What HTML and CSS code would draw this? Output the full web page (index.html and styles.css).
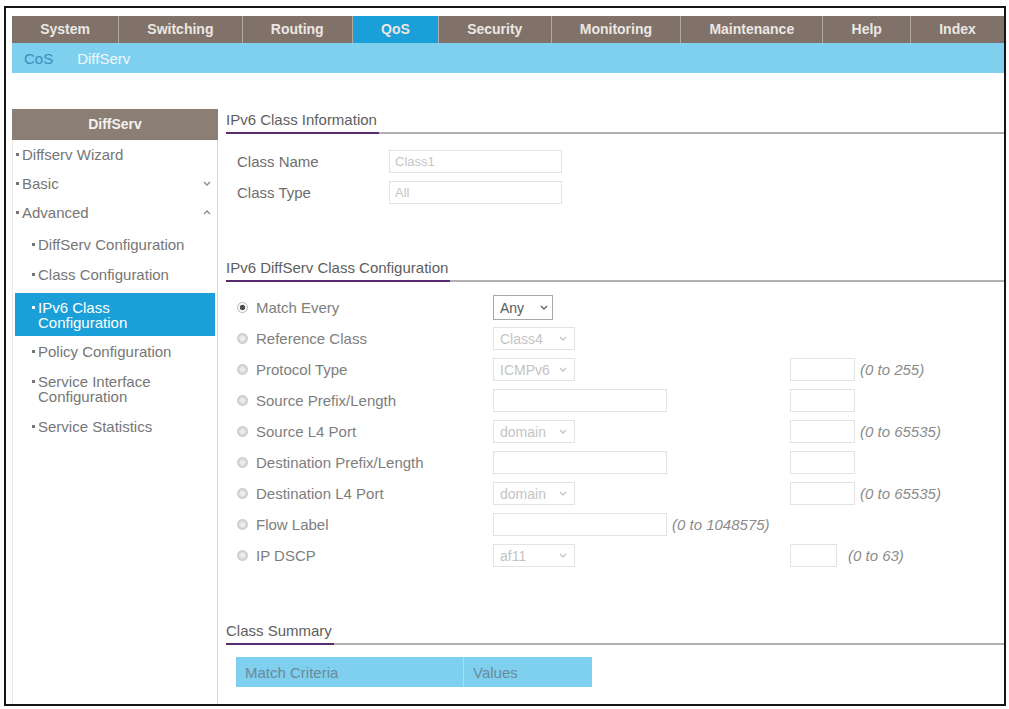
FILE: index.html
```html
<!DOCTYPE html>
<html lang="en">
<head>
    <meta charset="UTF-8">
    <meta name="viewport" content="width=device-width, initial-scale=1.0">
    <title>DiffServ - IPv6 Class Configuration</title>
    <link rel="stylesheet" href="styles.css">
</head>
<body>

    <div class="frame">
        <ul class="topnav">
            <li>System</li>
            <li>Switching</li>
            <li>Routing</li>
            <li class="active">QoS</li>
            <li>Security</li>
            <li>Monitoring</li>
            <li>Maintenance</li>
            <li>Help</li>
            <li>Index</li>
        </ul>
        <div class="subnav">
            <a href="#">CoS</a>
            <a href="#" class="current">DiffServ</a>
        </div>

        <div class="layout">
            <div class="sidebar">
                <div class="sidebar-title">DiffServ</div>
                <ul class="side-menu">
                    <li>Diffserv Wizard</li>
                    <li class="toggle">Basic
                        <svg class="chevron" width="8" height="5" viewBox="0 0 8 5"><path d="M1 1 L4 4 L7 1" fill="none" stroke="#8a8a8a" stroke-width="1.4"/></svg>
                    </li>
                    <li class="toggle">Advanced
                        <svg class="chevron" width="8" height="5" viewBox="0 0 8 5"><path d="M1 4 L4 1 L7 4" fill="none" stroke="#8a8a8a" stroke-width="1.4"/></svg>
                    </li>
                    <li class="sub first-sub">DiffServ Configuration</li>
                    <li class="sub">Class Configuration</li>
                    <li class="sub active">IPv6 Class Configuration</li>
                    <li class="sub">Policy Configuration</li>
                    <li class="sub">Service Interface Configuration</li>
                    <li class="sub">Service Statistics</li>
                </ul>
            </div>

            <div class="main">
                <h2 class="section-title"><span>IPv6 Class Information</span></h2>
                <div class="info-grid">
                    <label>Class Name</label>
                    <input type="text" class="field" value="Class1" disabled>
                    <label>Class Type</label>
                    <input type="text" class="field" value="All" disabled>
                </div>

                <h2 class="section-title second"><span>IPv6 DiffServ Class Configuration</span></h2>
                <div class="match-list">
                    <div class="match-row">
                        <div class="option"><span class="radio checked"></span>Match Every</div>
                        <div class="cell">
                            <div class="select enabled short"><span>Any</span>
                                <svg width="8" height="5" viewBox="0 0 8 5"><path d="M1 1 L4 4 L7 1" fill="none" stroke="#666" stroke-width="1.4"/></svg>
                            </div>
                        </div>
                        <div class="cell"></div>
                    </div>
                    <div class="match-row">
                        <div class="option"><span class="radio"></span>Reference Class</div>
                        <div class="cell">
                            <div class="select"><span>Class4</span>
                                <svg width="8" height="5" viewBox="0 0 8 5"><path d="M1 1 L4 4 L7 1" fill="none" stroke="#c4c4c4" stroke-width="1.4"/></svg>
                            </div>
                        </div>
                        <div class="cell"></div>
                    </div>
                    <div class="match-row">
                        <div class="option"><span class="radio"></span>Protocol Type</div>
                        <div class="cell">
                            <div class="select"><span>ICMPv6</span>
                                <svg width="8" height="5" viewBox="0 0 8 5"><path d="M1 1 L4 4 L7 1" fill="none" stroke="#c4c4c4" stroke-width="1.4"/></svg>
                            </div>
                        </div>
                        <div class="cell"><input type="text" class="field small" disabled><span class="range">(0 to 255)</span></div>
                    </div>
                    <div class="match-row">
                        <div class="option"><span class="radio"></span>Source Prefix/Length</div>
                        <div class="cell"><input type="text" class="field wide" disabled></div>
                        <div class="cell"><input type="text" class="field small" disabled></div>
                    </div>
                    <div class="match-row">
                        <div class="option"><span class="radio"></span>Source L4 Port</div>
                        <div class="cell">
                            <div class="select"><span>domain</span>
                                <svg width="8" height="5" viewBox="0 0 8 5"><path d="M1 1 L4 4 L7 1" fill="none" stroke="#c4c4c4" stroke-width="1.4"/></svg>
                            </div>
                        </div>
                        <div class="cell"><input type="text" class="field small" disabled><span class="range">(0 to 65535)</span></div>
                    </div>
                    <div class="match-row">
                        <div class="option"><span class="radio"></span>Destination Prefix/Length</div>
                        <div class="cell"><input type="text" class="field wide" disabled></div>
                        <div class="cell"><input type="text" class="field small" disabled></div>
                    </div>
                    <div class="match-row">
                        <div class="option"><span class="radio"></span>Destination L4 Port</div>
                        <div class="cell">
                            <div class="select"><span>domain</span>
                                <svg width="8" height="5" viewBox="0 0 8 5"><path d="M1 1 L4 4 L7 1" fill="none" stroke="#c4c4c4" stroke-width="1.4"/></svg>
                            </div>
                        </div>
                        <div class="cell"><input type="text" class="field small" disabled><span class="range">(0 to 65535)</span></div>
                    </div>
                    <div class="match-row">
                        <div class="option"><span class="radio"></span>Flow Label</div>
                        <div class="cell"><input type="text" class="field wide" disabled><span class="range">(0 to 1048575)</span></div>
                        <div class="cell"></div>
                    </div>
                    <div class="match-row">
                        <div class="option"><span class="radio"></span>IP DSCP</div>
                        <div class="cell">
                            <div class="select"><span>af11</span>
                                <svg width="8" height="5" viewBox="0 0 8 5"><path d="M1 1 L4 4 L7 1" fill="none" stroke="#c4c4c4" stroke-width="1.4"/></svg>
                            </div>
                        </div>
                        <div class="cell"><input type="text" class="field tiny" disabled><span class="range far">(0 to 63)</span></div>
                    </div>
                </div>

                <h2 class="section-title third"><span>Class Summary</span></h2>
                <table class="summary">
                    <tr>
                        <th class="criteria">Match Criteria</th>
                        <th>Values</th>
                    </tr>
                </table>
            </div>
        </div>
    </div>

</body>
</html>
```
FILE: styles.css
```css
body {
    margin: 0;
    background-color: #ffffff;
    font-family: "Liberation Sans", Arial, sans-serif;
    color: #777777;
}
.frame {
    box-sizing: border-box;
    width: 1002px;
    height: 700px;
    margin: 6px 0 0 4px;
    padding: 8px 0 0 6px;
    border: 2px solid #161616;
    display: flex;
    flex-direction: column;
    overflow: hidden;
}
.topnav {
    display: flex;
    list-style: none;
    margin: 0;
    padding: 0;
    height: 27px;
    background-color: #807269;
}
.topnav li {
    flex: 1 1 auto;
    padding: 0 21px;
    border-left: 1px solid #b3a9a2;
    color: #ebe7e3;
    font-size: 14px;
    font-weight: bold;
    line-height: 27px;
    text-align: center;
}
.topnav li:first-child {
    border-left: none;
}
.topnav li.active {
    background-color: #1b9fd8;
}
.subnav {
    display: flex;
    gap: 24px;
    height: 30px;
    padding-left: 12px;
    background-color: #7fcfee;
    font-size: 15px;
    line-height: 32px;
}
.subnav a {
    color: #3a8ebf;
    text-decoration: none;
}
.subnav a.current {
    color: #f0f9fd;
}
.layout {
    display: flex;
    flex: 1;
    margin-top: 36px;
}

/* sidebar */
.sidebar {
    width: 206px;
    flex-shrink: 0;
    display: flex;
    flex-direction: column;
}
.sidebar-title {
    height: 31px;
    line-height: 31px;
    background-color: #8b7e75;
    color: #f4f1ee;
    text-align: center;
    font-size: 14px;
    font-weight: bold;
}
.side-menu {
    flex: 1;
    list-style: none;
    margin: 0;
    padding: 0;
    border-left: 1px solid #e8e8e8;
    border-right: 1px solid #dcdcdc;
    font-size: 15px;
    line-height: 15px;
    color: #767676;
}
.side-menu li {
    display: flex;
    padding: 7px 28px 7px 3px;
}
.side-menu li::before {
    content: "";
    flex-shrink: 0;
    width: 3px;
    height: 3px;
    margin: 6px 3px 0 0;
    background-color: currentColor;
}
.side-menu li.toggle {
    padding-right: 6px;
}
.side-menu .chevron {
    margin: 5px 0 0 auto;
}
.side-menu li.sub {
    padding: 7.5px 28px 7.5px 19px;
}
.side-menu li.first-sub {
    margin-top: 2px;
}
.side-menu li.active {
    margin: 4px 2px 0 2px;
    padding: 6.5px 28px 6.5px 17px;
    background-color: #1b9fd8;
    color: #ffffff;
}

/* main content */
.main {
    flex: 1;
    padding: 2px 0 0 8px;
}
.section-title {
    margin: 0;
    font-size: 15px;
    font-weight: normal;
    line-height: 18px;
    color: #5e5e5e;
    border-bottom: 2px solid #b1afb2;
}
.section-title span {
    display: inline-block;
    padding: 0 2px 3px 0;
    margin-bottom: -2px;
    border-bottom: 2px solid #5b2b70;
}
.section-title.second {
    margin-top: 55px;
}
.section-title.third {
    margin-top: 51px;
}
.info-grid {
    display: grid;
    grid-template-columns: 152px 173px;
    row-gap: 8px;
    align-items: center;
    padding: 16px 0 0 11px;
    font-size: 15px;
    color: #6e6e6e;
}
.field {
    box-sizing: border-box;
    height: 23px;
    padding: 0 5px;
    border: 1px solid #e3e3e3;
    background-color: #ffffff;
    font-family: "Liberation Sans", Arial, sans-serif;
    font-size: 13px;
    color: #c6c6c6;
}
.info-grid .field {
    width: 173px;
}
.field.wide {
    width: 174px;
}
.field.small {
    width: 65px;
}
.field.tiny {
    width: 47px;
}
.match-list {
    padding: 10px 0 0 11px;
}
.match-row {
    display: grid;
    grid-template-columns: 256px 297px auto;
    height: 31px;
    align-items: center;
    font-size: 15px;
}
.option {
    display: flex;
    align-items: center;
    gap: 8px;
    color: #7e7e7e;
}
.radio {
    box-sizing: border-box;
    width: 11px;
    height: 11px;
    border-radius: 50%;
    border: 1px solid #c6c6c6;
    background: radial-gradient(circle, #ececec 0 2px, #d6d6d6 3.5px);
}
.radio.checked {
    border-color: #b8b8b8;
    background: radial-gradient(circle, #4e4e4e 0 2.2px, #ffffff 3.2px);
}
.cell {
    display: flex;
    align-items: center;
}
.select {
    box-sizing: border-box;
    display: flex;
    align-items: center;
    justify-content: space-between;
    width: 82px;
    height: 23px;
    padding: 0 7px 0 6px;
    border: 1px solid #e3e3e3;
    font-size: 14px;
    color: #c4c4c4;
}
.select.enabled {
    border-color: #a8a8a8;
    color: #5a5a5a;
}
.select.short {
    width: 60px;
    height: 25px;
    padding-right: 4px;
}
.range {
    margin-left: 5px;
    font-style: italic;
    font-size: 15px;
    color: #8c8c8c;
}
.range.far {
    margin-left: 11px;
}
.summary {
    margin: 12px 0 0 10px;
    border-collapse: collapse;
    width: 356px;
}
.summary th {
    height: 30px;
    padding: 0 0 0 9px;
    background-color: #7fcfee;
    text-align: left;
    font-size: 15px;
    font-weight: normal;
    color: #6a8a9c;
}
.summary th.criteria {
    width: 218px;
    border-right: 1px solid #a9def3;
}
```
